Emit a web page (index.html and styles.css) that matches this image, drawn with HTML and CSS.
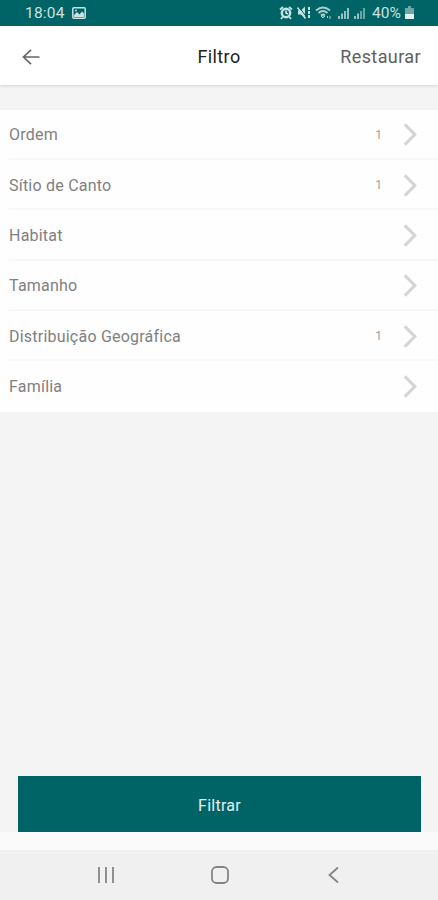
FILE: index.html
```html
<!DOCTYPE html>
<html lang="pt">
<head>
<meta charset="utf-8">
<title>Filtro</title>
<link rel="stylesheet" href="styles.css">
</head>
<body>
<div class="status">
  <span class="time">18:04</span>
  <svg class="photo" width="14" height="12" viewBox="0 0 14 12"><rect x=".8" y=".8" width="12.4" height="10.4" rx="1" fill="none" stroke="currentColor" stroke-width="1.5"/><path d="M2 10V8l3-3 2.5 2.5L10 4.500l2 2V10z" fill="currentColor"/><circle cx="4" cy="3.500" r=".9" fill="currentColor"/></svg>
  <svg class="signals" width="90" height="16" viewBox="0 0 90 16" fill="none" stroke="currentColor">
    <circle cx="8" cy="8" r="4.200" stroke-width="2.400"/><path d="M2 4.500L5 2M11 2l3 2.500M4.500 12L3 14M11.500 12l1.500 2M8 5.500V8l2 1" stroke-width="1.800"/>
    <path d="M20 5.500h3l4-4v12l-4-4h-3z" fill="currentColor" stroke="none"/><path d="M21 2l9 12" stroke="#006466" stroke-width="1"/><path d="M19.500 2.500l8 11" stroke-width="1.500"/><path d="M31 2v12" stroke-width="2" stroke-dasharray="3 1"/>
    <g opacity=".85"><path d="M38 5.500q7-6 14 0M40.500 8q4.500-4 9 0M43 10.500q2-2 4 0" stroke-width="1.800"/><path d="M45 13l-2-2h4zM49.500 11v2M52 11v3" stroke-width="1"/></g>
    <g stroke-width="2" opacity=".75"><path d="M61 11v3M64 8.500V14M67 6v8M70 3v11"/><path d="M77 11v3M80 8.500V14"/><path d="M83 6v8M86 3v11" opacity=".7"/></g>
  </svg>
  <span class="percent">40%</span>
  <svg class="battery" width="9" height="14" viewBox="0 0 9 14"><path d="M3 0h3v2h3v6H0V2h3z" fill="#6fa7a8"/><path d="M0 8h9v5H0z" fill="#e4f1f1"/></svg>
</div>
<header class="header">
  <svg class="back" width="18" height="16" viewBox="0 0 18 16"><path d="M17.500 8H1.500M9 .8L1.500 8 9 15.200" fill="none" stroke="#666" stroke-width="1.700"/></svg>
  <h1 class="title">Filtro</h1>
  <span class="reset">Restaurar</span>
</header>
<main class="content">
  <ul class="list">
    <li class="row"><span class="label">Ordem</span><span class="count">1</span><svg class="chevron" viewBox="0 0 14 24"><path d="M1.500 1.500L12 12 1.500 22.500"/></svg></li>
    <li class="row"><span class="label">Sítio de Canto</span><span class="count">1</span><svg class="chevron" viewBox="0 0 14 24"><path d="M1.500 1.500L12 12 1.500 22.500"/></svg></li>
    <li class="row"><span class="label">Habitat</span><svg class="chevron" viewBox="0 0 14 24"><path d="M1.500 1.500L12 12 1.500 22.500"/></svg></li>
    <li class="row"><span class="label">Tamanho</span><svg class="chevron" viewBox="0 0 14 24"><path d="M1.500 1.500L12 12 1.500 22.500"/></svg></li>
    <li class="row"><span class="label">Distribuição Geográfica</span><span class="count">1</span><svg class="chevron" viewBox="0 0 14 24"><path d="M1.500 1.500L12 12 1.500 22.500"/></svg></li>
    <li class="row"><span class="label">Família</span><svg class="chevron" viewBox="0 0 14 24"><path d="M1.500 1.500L12 12 1.500 22.500"/></svg></li>
  </ul>
  <button class="apply">Filtrar</button>
</main>
<nav class="nav">
  <svg width="18" height="18" viewBox="0 0 18 18"><path d="M2 1v16M9 1v16M16 1v16"/></svg>
  <svg width="18" height="18" viewBox="0 0 18 18"><rect x="1" y="1" width="16" height="16" rx="4.500"/></svg>
  <svg width="18" height="18" viewBox="0 0 18 18"><path d="M13 1.500L4.500 9l8.500 7.500"/></svg>
</nav>
</body>
</html>
```
FILE: styles.css
```css
* { box-sizing: border-box; }
body {
  margin: 0;
  height: 900px;
  display: flex;
  flex-direction: column;
  overflow: hidden;
  background: #fafafa;
  font-family: Roboto, sans-serif;
}
.status {
  height: 26px;
  flex: none;
  display: flex;
  align-items: center;
  padding: 0 24px 0 25px;
  background: #006466;
  color: #c9e1e1;
  font-size: 15.5px;
}
.time { width: 40px; letter-spacing: .2px; }
.photo { margin-left: 7px; }
.signals { margin-left: auto; }
.percent { width: 31px; margin-left: 4px; }
.battery { margin-left: 2px; }
.header {
  position: relative;
  z-index: 1;
  height: 59px;
  flex: none;
  display: grid;
  grid-template-columns: 1fr auto 1fr;
  align-items: center;
  padding: 2px 17px 0 22px;
  background: #fff;
  box-shadow: 0 1px 3px rgba(0, 0, 0, .13);
}
.title { margin: 0 5px 0 0; font-size: 18px; letter-spacing: .4px; font-weight: 400; color: #222; }
.reset { justify-self: end; font-size: 18px; letter-spacing: .4px; color: #606060; }
.content {
  height: 747px;
  flex: none;
  display: flex;
  flex-direction: column;
  padding-top: 24.5px;
  background: #f4f4f4;
}
.list { margin: 0; padding: 0; list-style: none; background: #fefefe; }
.row {
  height: 50.4px;
  display: flex;
  align-items: center;
  padding: 0 21px 0 9px;
  background: linear-gradient(#f8f8f8, #f8f8f8) 9px 100% / 100% 2px no-repeat;
}
.row:last-child { background: none; }
.label { font-size: 16px; letter-spacing: .22px; color: #808080; margin-right: auto; }
.count { font-size: 12px; color: #a0a0a0; margin-right: 21px; }
.chevron { width: 14px; height: 23px; fill: none; stroke: #d5d5d5; stroke-width: 3.3; }
.apply {
  height: 56px;
  margin: auto 17px 0 18px;
  padding: 2px 0 0;
  border: 0;
  background: #006466;
  color: #e4f0f0;
  font: 400 16px Roboto, sans-serif;
  letter-spacing: .25px;
}
.nav {
  height: 50px;
  margin-top: auto;
  flex: none;
  display: flex;
  align-items: center;
  justify-content: space-between;
  padding: 0 95px 0 97px;
  background: #f0f0f0;
}
.nav svg { fill: none; stroke: #858585; stroke-width: 1.8; }
```
